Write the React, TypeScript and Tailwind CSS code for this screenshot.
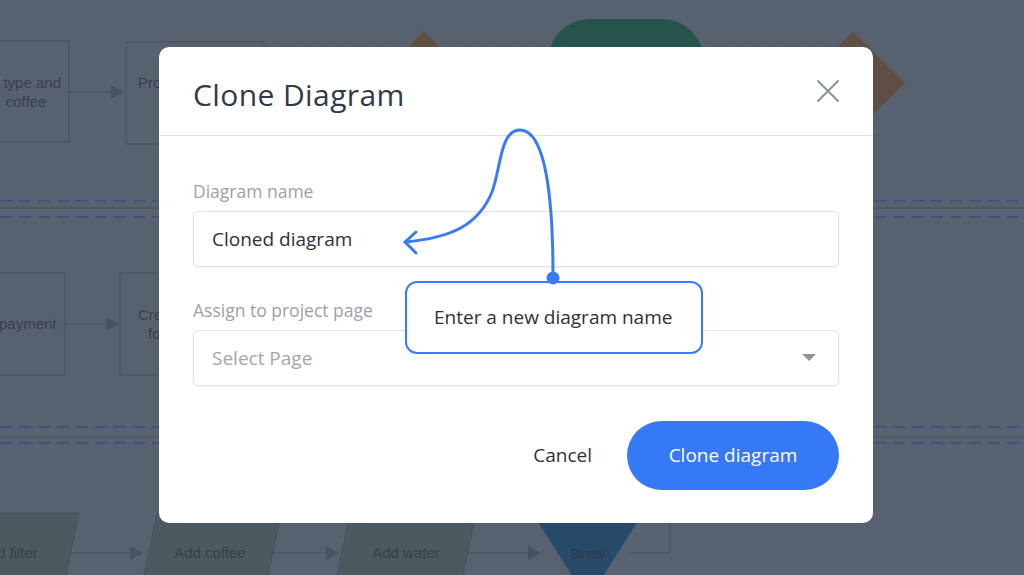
import React from "react";

function Arrow({ x, y }: { x: number; y: number }) {
  return <polygon points={`${x - 13},${y - 7} ${x},${y} ${x - 13},${y + 7}`} fill="#475161" />;
}

function Canvas() {
  const grid: React.ReactNode[] = [];
  for (let x = 0; x <= 1024; x += 18) {
    grid.push(<line key={"v" + x} x1={x} y1={0} x2={x} y2={575} stroke="#5b6473" strokeWidth={1} />);
  }
  for (let y = 0; y <= 575; y += 18) {
    grid.push(<line key={"h" + y} x1={0} y1={y} x2={1024} y2={y} stroke="#5b6473" strokeWidth={1} />);
  }
  return (
    <svg
      className="absolute inset-0 font-['Liberation_Sans',Arial,sans-serif] text-[15px] fill-[#38404d]"
      width={1024}
      height={575}
      viewBox="0 0 1024 575"
    >
      <rect x={0} y={0} width={1024} height={575} fill="#58616f" />
      {grid}
      <line x1={0} y1={201} x2={1024} y2={201} stroke="#404b88" strokeWidth={1.3} strokeDasharray="12 7" />
      <line x1={0} y1={208} x2={1024} y2={208} stroke="#4a5361" strokeWidth={1} />
      <line x1={0} y1={217} x2={1024} y2={217} stroke="#404b88" strokeWidth={1.3} strokeDasharray="12 7" />
      <line x1={0} y1={427} x2={1024} y2={427} stroke="#404b88" strokeWidth={1.3} strokeDasharray="12 7" />
      <line x1={0} y1={437} x2={1024} y2={437} stroke="#4a5361" strokeWidth={1} />
      <line x1={0} y1={443} x2={1024} y2={443} stroke="#404b88" strokeWidth={1.3} strokeDasharray="12 7" />

      <rect x={-40} y={41} width={109} height={101} fill="#58616f" stroke="#475161" strokeWidth={1} />
      <text x={61} y={88} textAnchor="end">type and</text>
      <text x={26} y={107} textAnchor="middle">coffee</text>
      <line x1={69} y1={92} x2={112} y2={92} stroke="#475161" strokeWidth={1} />
      <Arrow x={124} y={92} />
      <rect x={126} y={42} width={138} height={102} fill="#58616f" stroke="#475161" strokeWidth={1} />
      <text x={138} y={88}>Process</text>
      <polygon points="424,31 475,82 424,133 373,82" fill="#5e4f44" />
      <rect x={548} y={19} width={156} height={120} rx={42} fill="#26544d" />
      <polygon points="853,32 905,83 853,134 801,83" fill="#5e4f44" />

      <rect x={-40} y={273} width={105} height={102} fill="#58616f" stroke="#475161" strokeWidth={1} />
      <text x={-1} y={329}>payment</text>
      <line x1={65} y1={324} x2={107} y2={324} stroke="#475161" strokeWidth={1} />
      <Arrow x={119} y={324} />
      <rect x={120} y={273} width={140} height={102} fill="#58616f" stroke="#475161" strokeWidth={1} />
      <text x={138} y={320}>Create</text>
      <text x={148} y={339}>for</text>

      <polygon points="-40,513 79,513 63,590 -56,590" fill="#4b5a5e" stroke="#475161" strokeWidth={1} />
      <text x={-3} y={558}>d filter</text>
      <line x1={71} y1={553} x2={131} y2={553} stroke="#475161" strokeWidth={1} />
      <Arrow x={143} y={553} />
      <polygon points="157,513 281,513 265,590 141,590" fill="#4b5a5e" stroke="#475161" strokeWidth={1} />
      <text x={210} y={558} textAnchor="middle">Add coffee</text>
      <line x1={273} y1={553} x2={327} y2={553} stroke="#475161" strokeWidth={1} />
      <Arrow x={339} y={553} />
      <polygon points="350,513 476,513 460,590 334,590" fill="#4b5a5e" stroke="#475161" strokeWidth={1} />
      <text x={406} y={558} textAnchor="middle">Add water</text>
      <line x1={468} y1={553} x2={528} y2={553} stroke="#475161" strokeWidth={1} />
      <Arrow x={541} y={553} />
      <polygon points="532,513 643,513 588,600" fill="#284a69" />
      <text x={588} y={559} textAnchor="middle" className="fill-[#2b3a4d]">Brew</text>
      <polyline points="628,553 670,553 670,513" fill="none" stroke="#475161" strokeWidth={1} />
    </svg>
  );
}

export default function App() {
  return (
    <div className="relative w-[1024px] h-[575px] overflow-hidden bg-[#58616f] font-['Open_Sans',Lato,sans-serif]">
      <Canvas />
      <div className="absolute inset-0 flex justify-center items-start pt-[47px] pl-[8px]">
        <div className="relative w-[714px] h-[476px] bg-white rounded-[10px] flex flex-col">
          <div className="h-[89px] shrink-0 border-b border-[#dfe3ed] flex items-center justify-between px-[34px] pt-[6px]">
            <h1 className="text-[30px] text-[#2f3a4c] tracking-[0.4px]">Clone Diagram</h1>
            <svg width={24} height={24} viewBox="0 0 24 24" className="-mr-px -mt-[6px]">
              <path d="M2 2 L22 22 M22 2 L2 22" stroke="#8b939f" strokeWidth={2} strokeLinecap="round" />
            </svg>
          </div>
          <div className="flex flex-col px-[34px] pt-[43px]">
            <label className="text-[17.5px] leading-[24px] text-[#9ba1ac] mb-[8px]">Diagram name</label>
            <div className="h-[56px] border border-[#dde1e9] rounded-[5px] shadow-[0_1px_2px_rgba(0,0,0,0.06)] flex items-center px-[18px]">
              <span className="text-[19px] text-[#2e3136]">Cloned diagram</span>
            </div>
            <label className="text-[17.5px] leading-[24px] text-[#9ba1ac] mt-[31px] mb-[8px]">Assign to project page</label>
            <div className="h-[56px] border border-[#dde1e9] rounded-[5px] shadow-[0_1px_2px_rgba(0,0,0,0.06)] flex items-center justify-between pl-[18px] pr-[22px]">
              <span className="text-[19px] text-[#a2a6ae]">Select Page</span>
              <svg width={14} height={8} viewBox="0 0 14 8">
                <path d="M0 0 L14 0 L7 7 Z" fill="#8e959f" />
              </svg>
            </div>
            <div className="flex items-center justify-end mt-[35px] gap-[35px]">
              <span className="text-[19px] text-[#2e3136]">Cancel</span>
              <div className="w-[212px] h-[69px] rounded-full bg-[#3679f6] flex items-center justify-center">
                <span className="text-[19px] text-white">Clone diagram</span>
              </div>
            </div>
          </div>
          <div className="absolute left-[246px] top-[234px] w-[298px] h-[73px] border-2 border-[#3a7cf6] rounded-[12px] bg-white flex items-center pl-[27px]">
            <span className="text-[19px] text-[#2e3136]">Enter a new diagram name</span>
          </div>
        </div>
      </div>
      <svg className="absolute inset-0 pointer-events-none" width={1024} height={575} viewBox="0 0 1024 575">
        <path d="M553 276 C553 200 546 130 520 130 C 500 130 501 168 492 192 C 478 226 450 238 405 242" fill="none" stroke="#3a7bf5" strokeWidth={3} strokeLinecap="round" />
        <path d="M416 232 L405 242 L416 253" fill="none" stroke="#3a7bf5" strokeWidth={3} strokeLinecap="round" strokeLinejoin="round" />
        <circle cx={553} cy={278} r={6.5} fill="#3a7bf5" />
      </svg>
    </div>
  );
}
